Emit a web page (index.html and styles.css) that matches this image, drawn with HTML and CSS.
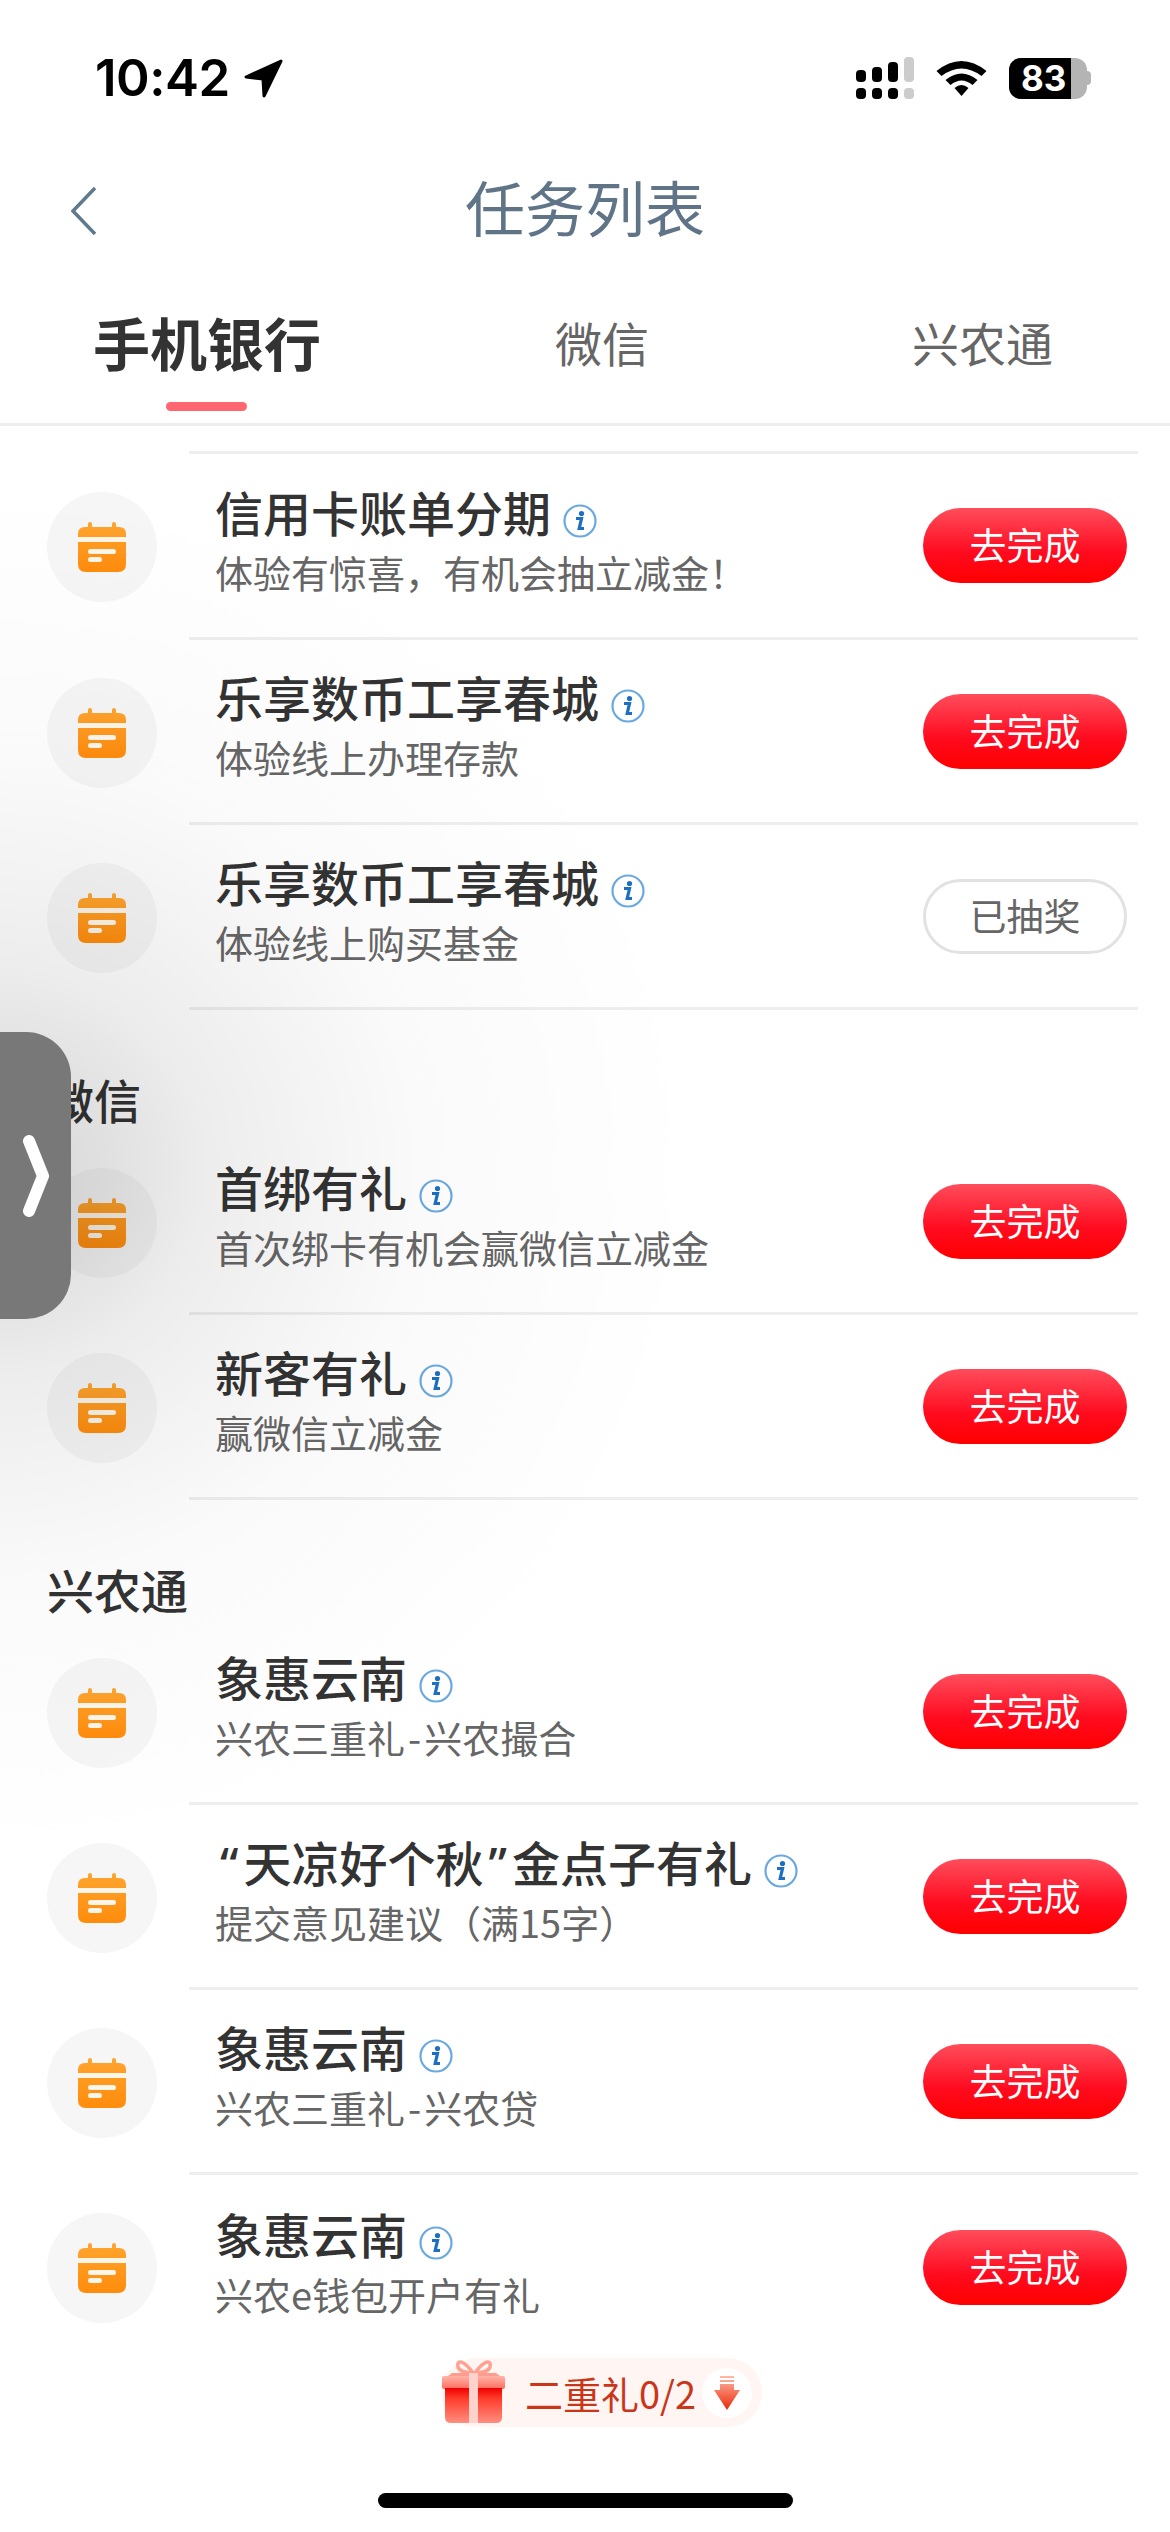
FILE: index.html
```html
<!DOCTYPE html>
<html lang="zh-CN">
<head>
  <meta charset="UTF-8">
  <title>任务列表</title>
  <meta name="viewport" content="width=device-width, initial-scale=1">
  <link rel="stylesheet" href="styles.css">
</head>
<body>

<div class="page">
  <!-- 状态栏 -->
  <div class="status">
    <div class="status-left">
      <span class="time">10:42</span>
      <svg class="loc" viewBox="0 0 40 40"><path d="M37 3 L2 19 L19 21 L20 38 Z" fill="#000" stroke="#000" stroke-width="3" stroke-linejoin="round"/></svg>
    </div>
    <div class="status-right">
      <svg class="signal" viewBox="0 0 58 42">
        <rect x="0" y="13" width="10" height="12" rx="4" fill="#000"/>
        <rect x="16" y="10" width="10" height="15" rx="4" fill="#000"/>
        <rect x="32" y="5" width="10" height="20" rx="4" fill="#000"/>
        <rect x="48" y="0" width="10" height="25" rx="4" fill="#ccc"/>
        <rect x="0" y="31" width="10" height="11" rx="4" fill="#000"/>
        <rect x="16" y="31" width="10" height="11" rx="4" fill="#000"/>
        <rect x="32" y="31" width="10" height="11" rx="4" fill="#000"/>
        <rect x="48" y="31" width="10" height="11" rx="4" fill="#ccc"/>
      </svg>
      <svg class="wifi" viewBox="0 0 50 38">
        <path d="M0 12 Q25 -8 50 12 L45 17 Q25 2 5 17 Z M9 21 Q25 8 41 21 L36 26 Q25 17 14 26 Z M18 29 Q25 23 32 29 L25 37 Z" fill="#000"/>
      </svg>
      <div class="battery">
        <div class="battery-body"><span class="battery-fill"></span><span class="battery-num">83</span></div>
        <span class="battery-cap"></span>
      </div>
    </div>
  </div>

  <!-- 标题栏 -->
  <div class="navbar">
    <svg class="back" viewBox="0 0 26 48"><path d="M24 1 L2 24 L24 47" fill="none" stroke="#5f7a8e" stroke-width="3.5"/></svg>
    <h1>任务列表</h1>
  </div>

  <div class="tabs">
    <div class="tab active">手机银行</div>
    <div class="tab tab-wx">微信</div>
    <div class="tab tab-xn">兴农通</div>
  </div>

  <div class="list" id="list"></div>
</div>

<!-- 左侧把手 -->
<div class="shade"></div>
<div class="handle">
  <svg viewBox="0 0 26 82"><path d="M6 6 L20 41 L6 76" fill="none" stroke="#fff" stroke-width="12" stroke-linecap="round" stroke-linejoin="round"/></svg>
</div>

<!-- 底部二重礼 -->
<div class="gift-bar">
  <svg class="gift" viewBox="0 0 64 64">
    <defs>
      <linearGradient id="gLid" x1="0" y1="0" x2="0" y2="1"><stop offset="0" stop-color="#ffb4a8"/><stop offset="1" stop-color="#ff6d5e"/></linearGradient>
      <linearGradient id="gBox" x1="0" y1="0" x2="0" y2="1"><stop offset="0" stop-color="#ee0000"/><stop offset="0.3" stop-color="#ff3b2b"/><stop offset="1" stop-color="#ff8f80"/></linearGradient>
    </defs>
    <path d="M31 14 C22 1 14 0 16 8 C17 12 24 14 31 14 Z M33 14 C42 1 50 0 48 8 C47 12 40 14 33 14 Z" fill="none" stroke="#ffa090" stroke-width="3.5"/>
    <path d="M10 14 L54 14 L58 17 L6 17 Z" fill="#ff9c90"/>
    <rect x="0" y="17" width="63" height="13" rx="2" fill="url(#gLid)"/>
    <path d="M3 29 H60 V58 Q60 64 54 64 H9 Q3 64 3 58 Z" fill="url(#gBox)"/>
    <rect x="27" y="14" width="9" height="50" fill="#ffd3cc"/>
  </svg>
  <span class="gift-text">二重礼0/2</span>
  <span class="gift-arrow">
    <svg viewBox="0 0 26 34">
      <defs><linearGradient id="gArr" x1="0" y1="0" x2="0" y2="1"><stop offset="0" stop-color="#ffb9a8"/><stop offset="1" stop-color="#e92a08"/></linearGradient></defs>
      <path d="M6 0 H20 V2 H6 Z M6 4 H20 V6 H6 Z M6 8 H20 V14 H26 L13 34 L0 14 H6 Z" fill="url(#gArr)"/>
    </svg>
  </span>
</div>

<div class="home-bar"></div>

<!-- gradiente do calendario, usado por todos os icones -->
<svg class="defs" width="0" height="0">
  <linearGradient id="gCal" x1="0" y1="0" x2="0" y2="1"><stop offset="0" stop-color="#ffa52f"/><stop offset="1" stop-color="#ff8c0c"/></linearGradient>
</svg>

<script>
  const secoes = [
    { titulo: "", itens: [
      ["信用卡账单分期", "体验有惊喜，有机会抽立减金！", "去完成"],
      ["乐享数币工享春城", "体验线上办理存款", "去完成"],
      ["乐享数币工享春城", "体验线上购买基金", "已抽奖"]
    ]},
    { titulo: "微信", itens: [
      ["首绑有礼", "首次绑卡有机会赢微信立减金", "去完成"],
      ["新客有礼", "赢微信立减金", "去完成"]
    ]},
    { titulo: "兴农通", itens: [
      ["象惠云南", "兴农三重礼<span class=\"dash\">-</span>兴农撮合", "去完成"],
      ["<span class=\"quote\">“</span>天凉好个秋<span class=\"quote\">”</span>金点子有礼", "提交意见建议（满15字）", "去完成"],
      ["象惠云南", "兴农三重礼<span class=\"dash\">-</span>兴农贷", "去完成"],
      ["象惠云南", "兴农e钱包开户有礼", "去完成"]
    ]}
  ];

  const iconeCal = `<svg viewBox="0 0 48 50">
    <path d="M12 0 Q14 0 14 2 V5 H34 V2 Q34 0 36 0 Q38 0 38 2 V5 H41 Q48 5 48 12 V42 Q48 50 40 50 H8 Q0 50 0 42 V12 Q0 5 7 5 H10 V2 Q10 0 12 0 Z" fill="url(#gCal)"/>
    <rect x="0" y="15" width="48" height="5" fill="#fff" opacity="0.9"/>
    <rect x="10" y="27" width="28" height="5" rx="2.5" fill="#fff" opacity="0.9"/>
    <rect x="10" y="35" width="14" height="5" rx="2.5" fill="#fff" opacity="0.9"/>
  </svg>`;

  const iconeInfo = `<svg class="info" viewBox="0 0 34 34">
    <circle cx="17" cy="17" r="15.5" fill="none" stroke="#6aa9e0" stroke-width="2.2"/>
    <circle cx="18.5" cy="9.5" r="2.6" fill="#1c6fc4"/>
    <path d="M13 14.5 H18.5 L16.2 24.5 H21" fill="none" stroke="#1c6fc4" stroke-width="3.2"/>
  </svg>`;

  const lista = document.getElementById("list");
  secoes.forEach((s) => {
    let html = s.titulo ? `<h2>${s.titulo}</h2>` : "";
    s.itens.forEach((i) => {
      const cls = i[2] === "已抽奖" ? "btn btn-done" : "btn";
      html += `<div class="row">
        <div class="circle">${iconeCal}</div>
        <div class="row-body">
          <div class="row-text">
            <div class="row-title"><span>${i[0]}</span>${iconeInfo}</div>
            <div class="row-sub">${i[1]}</div>
          </div>
          <div class="${cls}">${i[2]}</div>
        </div>
      </div>`;
    });
    lista.insertAdjacentHTML("beforeend", `<section class="${s.titulo ? "" : "first"}">${html}</section>`);
  });
</script>

</body>
</html>
```

FILE: styles.css
```css
* {
  box-sizing: border-box;
}
html, body {
  margin: 0;
  padding: 0;
}
body {
  position: relative;
  width: 1170px;
  height: 2532px;
  overflow: hidden;
  background: #fff;
  font-family: "Noto Sans CJK SC", "Noto Sans", sans-serif;
}
.defs {
  position: absolute;
}
.status {
  height: 160px;
  padding: 54px 79px 0 95px;
  display: flex;
  justify-content: space-between;
  align-items: flex-start;
}
.status-left {
  display: flex;
  align-items: center;
  gap: 14px;
}
.time {
  font-family: Inter, sans-serif;
  font-size: 51px;
  font-weight: 600;
  line-height: 48px;
  letter-spacing: -0.5px;
  color: #000;
}
.loc {
  width: 40px;
  height: 40px;
}
.status-right {
  display: flex;
  align-items: center;
  gap: 22px;
  padding-top: 3px;
}
.signal {
  width: 58px;
  height: 42px;
}
.wifi {
  width: 51px;
  height: 38px;
}
.battery {
  display: flex;
  align-items: center;
}
.battery-body {
  position: relative;
  width: 78px;
  height: 41px;
  border-radius: 12px;
  background: #b4b4b4;
  overflow: hidden;
}
.battery-fill {
  position: absolute;
  left: 0;
  top: 0;
  bottom: 0;
  width: 62px;
  background: #000;
}
.battery-num {
  position: absolute;
  left: 12px;
  top: 0;
  font-family: Inter, sans-serif;
  font-size: 35px;
  font-weight: 700;
  line-height: 41px;
  color: #fff;
}
.battery-cap {
  width: 4px;
  height: 14px;
  border-radius: 0 6px 6px 0;
  background: #b4b4b4;
}
.navbar {
  position: relative;
  height: 90px;
  display: flex;
  align-items: center;
  justify-content: center;
}
.navbar h1 {
  margin: 0;
  font-size: 60px;
  font-weight: 400;
  color: #5f7587;
}
.back {
  position: absolute;
  left: 71px;
  top: 27px;
  width: 26px;
  height: 48px;
}
.tabs {
  position: relative;
  height: 176px;
  display: flex;
  align-items: center;
  padding: 9px 0 0 93px;
  border-bottom: 3px solid #eee;
}
.tab {
  font-size: 47px;
  color: #666;
  white-space: nowrap;
}
.tab.active {
  position: relative;
  font-size: 57px;
  font-weight: 700;
  color: #333;
}
.tab.active::after {
  content: "";
  position: absolute;
  left: 73px;
  bottom: -29px;
  width: 81px;
  height: 9px;
  border-radius: 5px;
  background: #ff6670;
}
.tab-wx {
  margin-left: 234px;
}
.tab-xn {
  margin-left: 263px;
}
.list {
  padding-top: 25px;
}
.list h2 {
  margin: 0;
  height: 120px;
  padding: 58px 0 0 47px;
  font-size: 47px;
  font-weight: 500;
  line-height: 62px;
  color: #333;
}
.first::before {
  content: "";
  display: block;
  height: 3px;
  margin: 0 32px 0 189px;
  background: #eee;
}
.row {
  height: 185px;
  display: flex;
  align-items: center;
  padding-left: 47px;
}
.first .row:first-child {
  height: 186px;
}
.circle {
  width: 110px;
  height: 110px;
  flex-shrink: 0;
  border-radius: 50%;
  background: #f6f6f6;
  display: flex;
  align-items: center;
  justify-content: center;
}
.circle svg {
  width: 48px;
  height: 50px;
}
.row-body {
  flex: 1;
  height: 100%;
  margin-left: 32px;
  margin-right: 32px;
  padding: 0 11px 0 26px;
  display: flex;
  align-items: center;
  justify-content: space-between;
  border-bottom: 3px solid #eee;
}
.list section:last-child .row:last-child .row-body {
  border-bottom: none;
}
.row-text {
  margin-top: -14px;
}
.row-title {
  display: flex;
  align-items: center;
  gap: 12px;
  font-family: "Noto Sans", "Noto Sans CJK SC", sans-serif;
  font-size: 48px;
  font-weight: 500;
  line-height: 66px;
  color: #333;
}
.quote {
  padding: 0 5px;
}
.info {
  width: 34px;
  height: 34px;
  margin-top: 14px;
}
.row-sub {
  font-size: 38px;
  line-height: 50px;
  color: #666;
}
.dash {
  padding: 0 3px;
}
.btn {
  width: 204px;
  height: 75px;
  flex-shrink: 0;
  border-radius: 38px;
  background: linear-gradient(180deg, #ff4d5c 0%, #ff0a1e 60%, #ff0000 100%);
  color: #fff;
  font-size: 37px;
  line-height: 72px;
  text-align: center;
}
.btn-done {
  background: #fff;
  border: 3px solid #e2e2e2;
  color: #666;
  line-height: 66px;
}
/* sombra em volta do puxador */
.shade {
  position: absolute;
  left: -700px;
  top: 480px;
  width: 1400px;
  height: 1380px;
  pointer-events: none;
  background: radial-gradient(closest-side, rgba(0,0,0,0.16) 0%, rgba(0,0,0,0.12) 15%, rgba(0,0,0,0.07) 30%, rgba(0,0,0,0.02) 60%, rgba(0,0,0,0) 100%);
}
.handle {
  position: absolute;
  left: 0;
  top: 1032px;
  width: 71px;
  height: 287px;
  border-radius: 0 45px 45px 0;
  background: #787878;
  display: flex;
  align-items: center;
}
.handle svg {
  width: 26px;
  height: 82px;
  margin-left: 23px;
}
.gift-bar {
  position: absolute;
  left: 441px;
  top: 2358px;
  width: 321px;
  height: 69px;
  border-radius: 35px;
  background: #fff5f3;
  display: flex;
  align-items: center;
}
.gift {
  width: 64px;
  height: 64px;
  margin: -4px 0 0 1px;
  flex-shrink: 0;
}
.gift-text {
  margin-left: 19px;
  font-size: 38px;
  color: #c9361a;
  white-space: nowrap;
}
.gift-arrow {
  position: absolute;
  right: 10px;
  top: 10px;
  width: 50px;
  height: 50px;
  border-radius: 50%;
  background: #fff;
  display: flex;
  align-items: center;
  justify-content: center;
}
.gift-arrow svg {
  width: 26px;
  height: 34px;
}
.home-bar {
  position: absolute;
  left: 378px;
  top: 2493px;
  width: 415px;
  height: 15px;
  border-radius: 8px;
  background: #000;
}
```
